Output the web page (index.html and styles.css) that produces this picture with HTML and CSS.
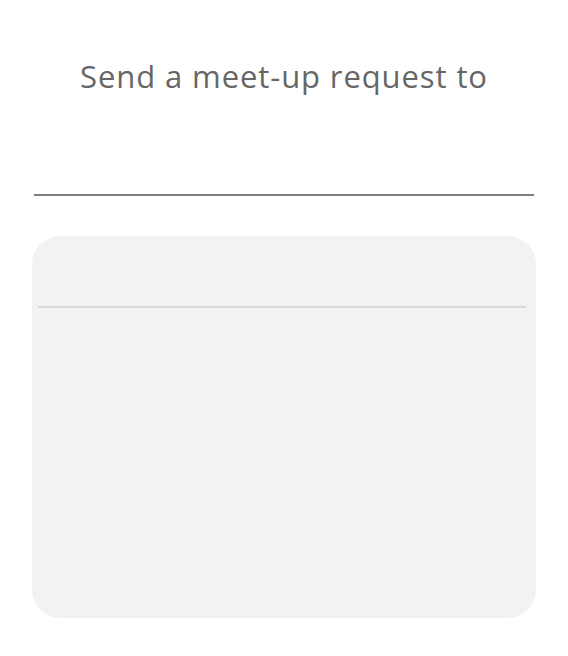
FILE: index.html
```html
<!DOCTYPE html>
<html>
<head>
<meta charset="utf-8">
<link rel="stylesheet" href="styles.css">
</head>
<body>
<main class="page">
  <h1 class="title">Send a meet-up request to</h1>
  <div class="recipient"></div>
  <section class="card">
    <div class="card-head"></div>
    <div class="card-body"></div>
  </section>
</main>
</body>
</html>
```
FILE: styles.css
```css
html, body {
  margin: 0;
  padding: 0;
  background: #ffffff;
}
.page {
  width: 568px;
  height: 656px;
  display: flex;
  flex-direction: column;
  align-items: center;
  font-family: "Open Sans", "DejaVu Sans", sans-serif;
}
.title {
  margin: 54px 0 0;
  height: 44px;
  font-size: 31px;
  line-height: 44px;
  font-weight: 400;
  letter-spacing: 0.9px;
  color: #666666;
  text-align: center;
  white-space: nowrap;
}
.recipient {
  margin-top: 96px;
  width: 500px;
  height: 0;
  border-bottom: 2px solid #7f7f7f;
}
.card {
  margin-top: 40px;
  width: 504px;
  height: 382px;
  background: #f2f2f2;
  border-radius: 28px;
  display: flex;
  flex-direction: column;
  align-items: flex-start;
}
.card-head {
  margin-left: 6px;
  width: 488px;
  height: 70px;
  border-bottom: 2px solid #d9d9d9;
}
.card-body {
  flex: 1;
}
```
